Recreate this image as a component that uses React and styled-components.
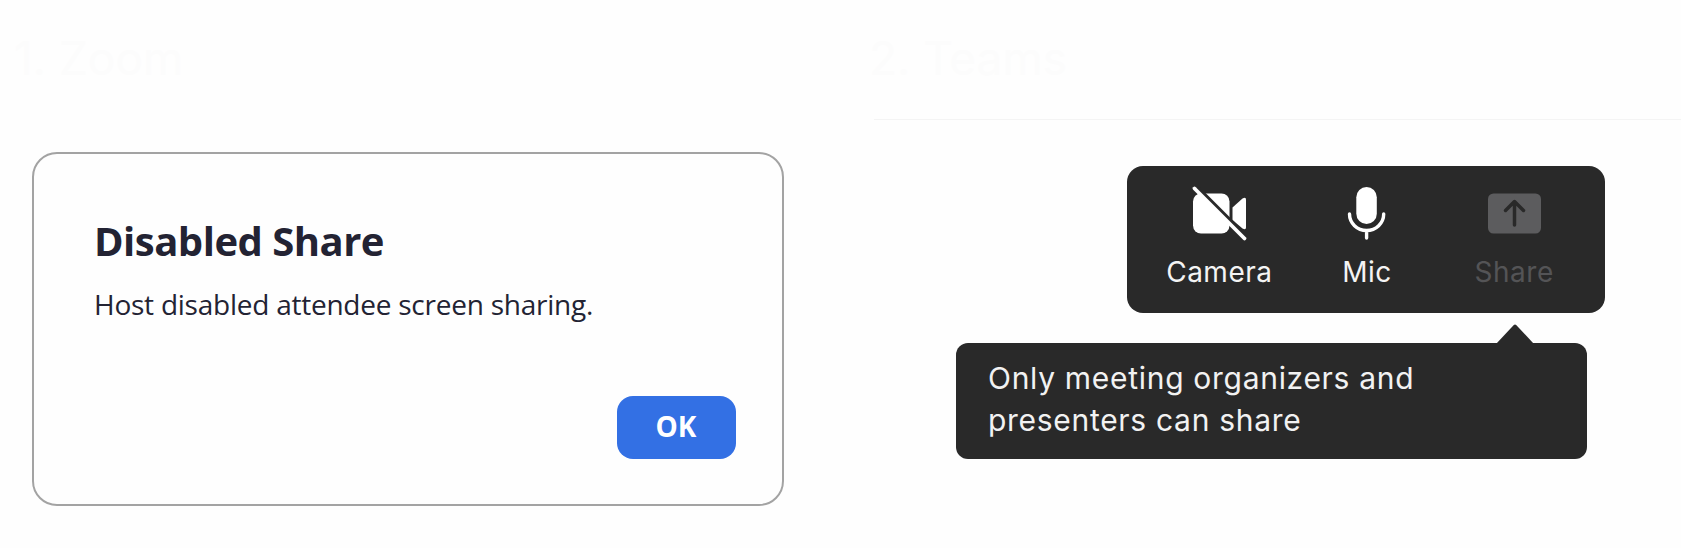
import React from 'react';
import styled, { createGlobalStyle } from 'styled-components';

const GlobalStyle = createGlobalStyle`
    * {
        box-sizing: border-box;
    }

    body {
        margin: 0;
        background-color: #fefefe;
    }
`

const Page = styled.main`
    display: grid;
    grid-template-columns: 874px 1fr;
    width: 1681px;
    height: 548px;
    overflow: hidden;
`

const Column = styled.section`
    display: flex;
    flex-direction: column;
    font-family: Inter, 'Liberation Sans', sans-serif;
`

// barely visible section heading
const Heading = styled.h2`
    height: 119px;
    margin: 0 0 0 ${props => props.$indent}px;
    padding-top: 30px;
    color: #fcfcfc;
    font-size: 46px;
    line-height: 56px;
    font-weight: 400;
    white-space: nowrap;
`

const Dialog = styled.div`
    display: flex;
    flex-direction: column;
    width: 752px;
    height: 354px;
    margin: 33px 0 0 31.5px;
    padding: 60px 46px 45px 60.5px;
    border: 2px solid #a3a3a3;
    border-radius: 25px;
    font-family: 'Open Sans', 'Noto Sans', sans-serif;
    color: #232333;
`

const Title = styled.h1`
    margin: 0;
    font-size: 40px;
    line-height: 54px;
    font-weight: 700;
    letter-spacing: -0.5px;
    white-space: nowrap;
`

const Message = styled.p`
    margin: 17px 0 0;
    font-size: 28px;
    line-height: 38px;
    letter-spacing: -0.24px;
    white-space: nowrap;
`

const OkButton = styled.button`
    width: 119px;
    height: 63px;
    margin-top: auto;
    margin-left: auto;
    padding: 0 0 3px;
    border: none;
    border-radius: 16px;
    background-color: #3370e4;
    color: white;
    font-family: inherit;
    font-size: 28px;
    font-weight: 700;
`

const Divider = styled.hr`
    width: 100%;
    height: 1px;
    margin: 0;
    border: none;
    background-color: #f4f4f4;
`

const Toolbar = styled.div`
    display: flex;
    width: 478px;
    height: 147px;
    margin: 46px 0 0 253px;
    padding: 20px 17px 0;
    border-radius: 16px;
    background-color: #292929;
`

const Tool = styled.div`
    display: flex;
    flex-direction: column;
    align-items: center;
    width: ${props => props.$width}px;
    color: ${props => props.$disabled ? '#5c5c5e' : 'white'};
`

const ToolIcon = styled.svg`
    width: 56px;
    height: 56px;
    overflow: visible;
`

const ToolLabel = styled.span`
    margin-top: 13px;
    padding-left: 1px;
    font-size: 28px;
    line-height: 34px;
    letter-spacing: 0.5px;
    color: ${props => props.$disabled ? '#545456' : '#f4f4f4'};
`

const Tooltip = styled.div`
    position: relative;
    width: 631px;
    height: 116px;
    margin: 30px 0 0 82px;
    padding: 14px 32px;
    border-radius: 12px;
    background-color: #292929;
    color: #f2f2f2;
    font-size: 30px;
    line-height: 42px;
    letter-spacing: 0.7px;
`

const Arrow = styled.svg`
    position: absolute;
    top: -19px;
    left: 540px;
    width: 38px;
    height: 20px;
`

const CameraOffIcon = () => (
    <ToolIcon viewBox="0 0 56 56">
        <rect x="2" y="7.5" width="36.5" height="40" rx="8" fill="currentColor"/>
        <path d="M41.5 21.5 51.500 12.500q3.500-2 3.500 1v28q0 3-3.500 1l-10-8.500Z" fill="currentColor"/>
        {/* dark gap above the slash */}
        <path d="M7 2.500 56 51.500" stroke="#292929" strokeWidth="4.5"/>
        <path d="M3.500 2.500 53.500 52.500" stroke="currentColor" strokeWidth="3.8" strokeLinecap="round"/>
    </ToolIcon>
);

const MicIcon = () => (
    <ToolIcon viewBox="0 0 56 56">
        <rect x="18.3" y="1" width="20.500" height="37" rx="10.25" fill="currentColor"/>
        <path d="M11.500 28a17.100 16.500 0 0 0 34.200 0M28.600 44.500v7.500" fill="none" stroke="currentColor" strokeWidth="3.4" strokeLinecap="round"/>
    </ToolIcon>
);

const ShareIcon = () => (
    <ToolIcon viewBox="0 0 56 56">
        <rect x="2" y="7.5" width="53" height="40" rx="5.5" fill="currentColor"/>
        <path d="M28.500 39V16M19.500 24.500l9-9 9 9" fill="none" stroke="#292929" strokeWidth="3.5" strokeLinecap="round" strokeLinejoin="round"/>
    </ToolIcon>
);

const App = () => {
    return (
        <Page>
            <GlobalStyle/>
            <Column>
                <Heading $indent={14}>1. Zoom</Heading>
                <Dialog role="dialog">
                    <Title>Disabled Share</Title>
                    <Message>Host disabled attendee screen sharing.</Message>
                    <OkButton>OK</OkButton>
                </Dialog>
            </Column>
            <Column>
                <Heading $indent={-5}>2. Teams</Heading>
                <Divider/>
                <Toolbar>
                    <Tool $width={150}>
                        <CameraOffIcon/>
                        <ToolLabel>Camera</ToolLabel>
                    </Tool>
                    <Tool $width={146}>
                        <MicIcon/>
                        <ToolLabel>Mic</ToolLabel>
                    </Tool>
                    <Tool $width={149} $disabled>
                        <ShareIcon/>
                        <ToolLabel $disabled>Share</ToolLabel>
                    </Tool>
                </Toolbar>
                <Tooltip role="tooltip">
                    <Arrow viewBox="0 0 38 20">
                        <path d="M0 20 17.800 1q1.200-1 2.400 0L38 20Z" fill="#292929"/>
                    </Arrow>
                    Only meeting organizers and<br/>
                    presenters can share
                </Tooltip>
            </Column>
        </Page>
    );
}

export default App;
